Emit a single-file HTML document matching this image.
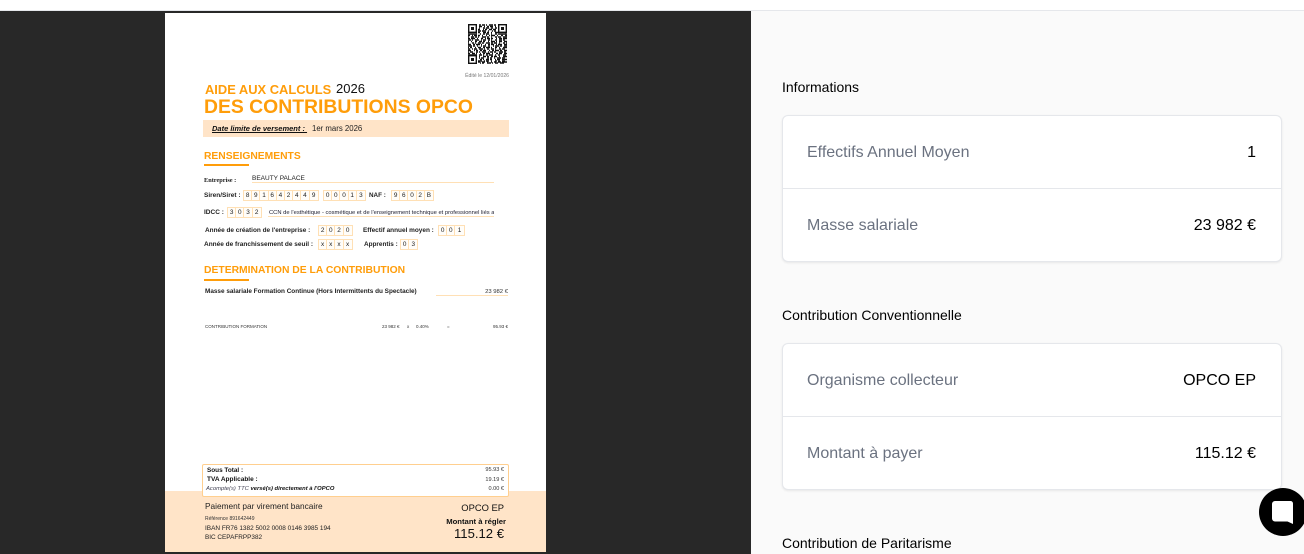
<!DOCTYPE html>
<html lang="fr">
<head>
<meta charset="utf-8">
<title>Contributions OPCO</title>
<style>
html,body{margin:0;padding:0;width:1304px;height:554px;overflow:hidden;background:#fafafa;font-family:"Liberation Sans",Arial,sans-serif;color:#000}
.a{position:absolute;white-space:nowrap}
#top{position:absolute;left:0;top:0;width:1304px;height:10px;background:#fff;border-bottom:1px solid #e5e7eb}
#dark{position:absolute;left:0;top:11px;width:751px;height:543px;background:#282828}
#page{position:absolute;left:165px;top:13px;width:381px;height:539px;background:#fff;overflow:hidden}
#doc{position:absolute;left:-165px;top:-13px;width:751px;height:554px;filter:blur(.35px)}
.or{color:#ff9d0a;font-weight:bold}
.b{font-weight:bold}
.boxes{position:absolute;display:flex;height:9px;border:1px solid #ffe0b5;background:#fffdf9}
.boxes span{width:8.2px;text-align:center;font-size:6.4px;line-height:9px;border-right:1px solid #ffe0b5;color:#222;box-sizing:border-box}
.boxes span:last-child{border-right:0}
.card{position:absolute;left:782px;width:498px;height:145px;background:#fff;border:1px solid #e5e7eb;border-radius:6px;box-shadow:0 1px 2px rgba(0,0,0,.08)}
.card .line{position:absolute;left:0;right:0;top:72px;height:1px;background:#e5e7eb}
.card .l,.card .r{position:absolute;font-size:16px;line-height:20px;white-space:nowrap}
.card .l{left:24px;color:#6b7280}
.card .r{right:25px;color:#000}
.h{position:absolute;left:782px;font-size:14px;line-height:18px;color:#000;white-space:nowrap}
#chat{position:absolute;left:1259px;top:488px;width:48px;height:48px;border-radius:50%;background:#000}
</style>
</head>
<body>
<div id="top"></div>
<div id="dark"></div>
<div id="page"><div id="doc">
  <svg class="a" style="left:468px;top:24px" width="39" height="40" viewBox="0 0 39 40">
    <g fill="none" stroke="#111" stroke-width="1.5">
      <path d="M0 1H39" stroke-dasharray="9 2 2 1 3 1 1 2 4 1 2 2 9"/>
      <path d="M0 4H39" stroke-dasharray="2 5 2 2 1 3 2 1 3 2 2 2 2 5 3"/>
      <path d="M0 5.500H39" stroke-dasharray="9 1 2 3 1 1 2 2 3 1 3 2 9"/>
      <path d="M0 7H39" stroke-dasharray="2 5 2 1 3 1 4 2 1 3 1 1 2 5 2"/>
      <path d="M0 10H39" stroke-dasharray="9 3 1 2 2 1 3 2 1 3 2 1 9"/>
      <path d="M0 11.500H39" stroke-dasharray="2 2 1 1 3 1 2 2 1 3 1 2 1 1 4 2 1 3 2"/>
      <path d="M0 13H39" stroke-dasharray="1 2 3 1 2 1 1 3 4 1 2 2 1 3 2 1 3 2 4"/>
      <path d="M0 16H39" stroke-dasharray="3 1 1 2 4 2 1 1 3 2 2 1 1 3 2 2 3 1 2"/>
      <path d="M0 19H39" stroke-dasharray="1 3 2 1 1 2 3 1 2 2 4 1 2 1 3 2 1 3 2"/>
      <path d="M0 22H39" stroke-dasharray="4 1 2 2 1 3 1 1 3 2 2 3 1 1 4 1 2 2 3"/>
      <path d="M0 25H39" stroke-dasharray="2 2 1 1 3 2 4 1 1 2 2 2 3 1 1 3 2 1 3"/>
      <path d="M0 28H39" stroke-dasharray="1 1 3 3 2 1 1 2 4 2 1 1 3 1 2 3 4 1 2"/>
      <path d="M0 31H39" stroke-dasharray="9 2 3 1 1 2 2 1 4 2 1 2 2 3 3"/>
      <path d="M0 34H39" stroke-dasharray="2 5 2 2 1 1 3 3 2 1 2 2 1 2 4 1 3"/>
      <path d="M0 37H39" stroke-dasharray="2 5 2 1 4 2 1 1 3 2 1 3 2 1 2 2 3"/>
      <path d="M0 39H39" stroke-dasharray="9 3 1 1 2 3 4 1 1 2 3 2 4 3"/>
      <path d="M0 2.500H39" stroke-dasharray="1 7 1 2 3 2 1 2 2 1 3 2 1 7 1"/>
      <path d="M0 8.500H39" stroke-dasharray="1 7 1 1 2 3 3 1 2 2 1 3 3 7 1"/>
      <path d="M0 14.500H39" stroke-dasharray="2 1 4 2 1 3 2 2 1 1 3 1 2 3 1 2 3 1 4"/>
      <path d="M0 17.500H39" stroke-dasharray="1 2 1 3 2 2 3 1 2 3 1 2 4 1 1 2 3 2 3"/>
      <path d="M0 20.500H39" stroke-dasharray="3 2 2 1 4 1 1 3 1 2 2 1 3 2 1 1 4 2 3"/>
      <path d="M0 23.500H39" stroke-dasharray="1 1 2 3 1 2 3 2 2 1 4 1 1 3 2 2 1 3 4"/>
      <path d="M0 26.500H39" stroke-dasharray="3 3 1 1 2 2 2 1 3 3 1 2 2 1 4 1 2 2 3"/>
      <path d="M0 29.500H39" stroke-dasharray="2 2 3 1 1 3 1 2 2 1 4 2 1 3 2 1 3 2 3"/>
      <path d="M0 32.500H39" stroke-dasharray="1 7 1 2 1 3 3 1 2 2 2 1 3 2 1 3 4"/>
      <path d="M0 35.500H39" stroke-dasharray="2 5 2 3 2 1 1 2 3 1 2 3 1 1 3 2 5"/>
      <path d="M0 38H39" stroke-dasharray="1 7 1 1 2 2 3 2 1 3 1 2 2 2 3 1 5"/>
    </g>
    <g fill="none" stroke="#111" stroke-width="1.4">
      <rect x=".7" y=".7" width="7.600" height="7.600" fill="#fff"/>
      <rect x="30.700" y=".7" width="7.600" height="7.600" fill="#fff"/>
      <rect x=".7" y="31.700" width="7.600" height="7.600" fill="#fff"/>
    </g>
    <g fill="#111"><rect x="3" y="3" width="3" height="3"/><rect x="33" y="3" width="3" height="3"/><rect x="3" y="34" width="3" height="3"/></g>
  </svg>
  <div class="a" style="right:242px;top:73px;font-size:5.1px;line-height:6px;color:#777">Édité le 12/01/2026</div>

  <div class="a or" style="left:205px;top:82px;font-size:12.900px;line-height:15px">AIDE AUX CALCULS</div>
  <div class="a" style="left:336px;top:81px;font-size:13px;line-height:15px;color:#111">2026</div>
  <div class="a or" style="left:204px;top:95.600px;font-size:19.380px;line-height:22px">DES CONTRIBUTIONS OPCO</div>
  <div class="a" style="left:203px;top:120px;width:306px;height:17px;background:#ffe4c8"></div>
  <div class="a" style="left:212px;top:123.500px;font-size:7.500px;line-height:10px;font-weight:bold;font-style:italic;text-decoration:underline;color:#111">Date limite de versement :&nbsp;</div>
  <div class="a" style="left:312px;top:123.500px;font-size:7.800px;line-height:10px;color:#222">1er mars 2026</div>

  <div class="a or" style="left:204px;top:150px;font-size:10.300px;line-height:13px">RENSEIGNEMENTS</div>
  <div class="a" style="left:204px;top:164px;width:45px;height:2px;background:#ff9d0a"></div>

  <div class="a b" style="left:204px;top:176.500px;font-family:'Liberation Serif',serif;font-size:6.300px;line-height:7px;color:#222">Entreprise :</div>
  <div class="a" style="left:252px;top:175px;font-size:6.500px;line-height:8px;color:#222">BEAUTY PALACE</div>
  <div class="a" style="left:252px;top:182px;width:242px;height:1px;background:#ffe0b5"></div>

  <div class="a b" style="left:204px;top:191.500px;font-size:6.500px;line-height:8px;color:#222">Siren/Siret :</div>
  <div class="boxes" style="left:243px;top:190px"><span>8</span><span>9</span><span>1</span><span>6</span><span>4</span><span>2</span><span>4</span><span>4</span><span>9</span></div>
  <div class="boxes" style="left:323px;top:190px"><span>0</span><span>0</span><span>0</span><span>1</span><span>3</span></div>
  <div class="a b" style="left:369px;top:191.500px;font-size:6.300px;line-height:8px;color:#222">NAF :</div>
  <div class="boxes" style="left:391px;top:190px"><span>9</span><span>6</span><span>0</span><span>2</span><span>B</span></div>

  <div class="a b" style="left:204px;top:208.500px;font-size:6.500px;line-height:8px;color:#222">IDCC :</div>
  <div class="boxes" style="left:227px;top:207px"><span>3</span><span>0</span><span>3</span><span>2</span></div>
  <div class="a" style="left:269px;top:208.500px;width:225px;overflow:hidden;font-size:5.800px;line-height:8px;color:#223">CCN de l'esthétique - cosmétique et de l'enseignement technique et professionnel liés a</div>
  <div class="a" style="left:268px;top:216px;width:226px;height:1px;background:#ffe0b5"></div>

  <div class="a b" style="left:205px;top:226.700px;font-size:6.450px;line-height:8px;color:#222">Année de création de l'entreprise :</div>
  <div class="boxes" style="left:318px;top:225px"><span>2</span><span>0</span><span>2</span><span>0</span></div>
  <div class="a b" style="left:363px;top:226.700px;font-size:6.450px;line-height:8px;color:#222">Effectif annuel moyen :</div>
  <div class="boxes" style="left:438px;top:225px"><span>0</span><span>0</span><span>1</span></div>
  <div class="a b" style="left:204px;top:240.700px;font-size:6.500px;line-height:8px;color:#222">Année de franchissement de seuil :</div>
  <div class="boxes" style="left:318px;top:239px"><span>x</span><span>x</span><span>x</span><span>x</span></div>
  <div class="a b" style="left:364px;top:240.700px;font-size:6.400px;line-height:8px;color:#222">Apprentis :</div>
  <div class="boxes" style="left:400px;top:239px"><span>0</span><span>3</span></div>

  <div class="a or" style="left:204px;top:264px;font-size:10.350px;line-height:13px">DETERMINATION DE LA CONTRIBUTION</div>
  <div class="a" style="left:204px;top:279px;width:45px;height:2px;background:#ff9d0a"></div>

  <div class="a b" style="left:205px;top:288px;font-size:6.400px;line-height:8px;color:#222">Masse salariale Formation Continue (Hors Intermittents du Spectacle)</div>
  <div class="a" style="left:436px;top:295px;width:72px;height:1px;background:#ffe0b5"></div>
  <div class="a" style="right:243px;top:288.500px;font-size:5.900px;line-height:7px;color:#333">23 982 €</div>

  <div class="a" style="left:205px;top:323.500px;font-size:4.500px;line-height:6px;color:#333">CONTRIBUTION FORMATION</div>
  <div class="a" style="left:382px;top:323.500px;font-size:4.500px;line-height:6px;color:#333">23 982 €</div>
  <div class="a" style="left:407px;top:323.500px;font-size:4.500px;line-height:6px;color:#333">x</div>
  <div class="a" style="left:416px;top:323.500px;font-size:4.500px;line-height:6px;color:#333">0.40%</div>
  <div class="a" style="left:447px;top:323.500px;font-size:4.500px;line-height:6px;color:#333">=</div>
  <div class="a" style="right:243px;top:323.500px;font-size:4.500px;line-height:6px;color:#333">95.93 €</div>

  <div class="a" style="left:165px;top:491px;width:381px;height:61px;background:#ffe4c8"></div>
  <div class="a" style="left:202px;top:464px;width:305px;height:31px;background:#fff;border:1px solid #ffcf8f;border-radius:2px"></div>
  <div class="a b" style="left:207px;top:466.500px;font-size:6.400px;line-height:8px;color:#111">Sous Total :</div>
  <div class="a" style="right:247px;top:467px;font-size:5.600px;line-height:7px;color:#333">95.93 €</div>
  <div class="a b" style="left:207px;top:476px;font-size:6.500px;line-height:8px;color:#111">TVA Applicable :</div>
  <div class="a" style="right:247px;top:476.500px;font-size:5.600px;line-height:7px;color:#333">19.19 €</div>
  <div class="a" style="left:206px;top:485px;font-size:5.850px;line-height:8px;font-style:italic;color:#445">Acompte(s) TTC <b style="color:#111">versé(s) directement à l'OPCO</b></div>
  <div class="a" style="right:247px;top:486px;font-size:5.600px;line-height:7px;color:#333">0.00 €</div>

  <div class="a" style="left:205px;top:500.600px;font-size:8.300px;line-height:10px;color:#222">Paiement par virement bancaire</div>
  <div class="a" style="left:205px;top:515.500px;font-size:5px;line-height:7px;color:#333">Référence 891642449</div>
  <div class="a" style="left:205px;top:523.500px;font-size:6.450px;line-height:9px;color:#222">IBAN FR76 1382 5002 0008 0146 3985 194</div>
  <div class="a" style="left:205px;top:532.500px;font-size:6.400px;line-height:9px;color:#222">BIC CEPAFRPP382</div>
  <div class="a" style="right:247px;top:502px;font-size:9.400px;line-height:12px;color:#111">OPCO EP</div>
  <div class="a b" style="right:245px;top:517px;font-size:7.700px;line-height:9px;color:#111">Montant à régler</div>
  <div class="a" style="right:247px;top:526px;font-size:13.100px;line-height:16px;color:#111">115.12 €</div>
</div></div>

<div class="h" style="top:78px">Informations</div>
<div class="card" style="top:115px">
  <div class="l" style="top:27px">Effectifs Annuel Moyen</div><div class="r" style="top:27px">1</div>
  <div class="line"></div>
  <div class="l" style="top:100px">Masse salariale</div><div class="r" style="top:100px">23 982 €</div>
</div>
<div class="h" style="top:306px">Contribution Conventionnelle</div>
<div class="card" style="top:343px">
  <div class="l" style="top:27px">Organisme collecteur</div><div class="r" style="top:27px">OPCO EP</div>
  <div class="line"></div>
  <div class="l" style="top:100px">Montant à payer</div><div class="r" style="top:100px">115.12 €</div>
</div>
<div class="h" style="top:534px">Contribution de Paritarisme</div>

<div id="chat">
  <svg width="48" height="48" viewBox="0 0 48 48" style="position:absolute;left:0;top:0">
    <path fill="#fff" d="M16 13H31.500A2.500 2.500 0 0 1 34 15.500V36L28.500 33.500H16A3 3 0 0 1 13 30.500V16A3 3 0 0 1 16 13Z"/>
  </svg>
</div>
</body>
</html>
